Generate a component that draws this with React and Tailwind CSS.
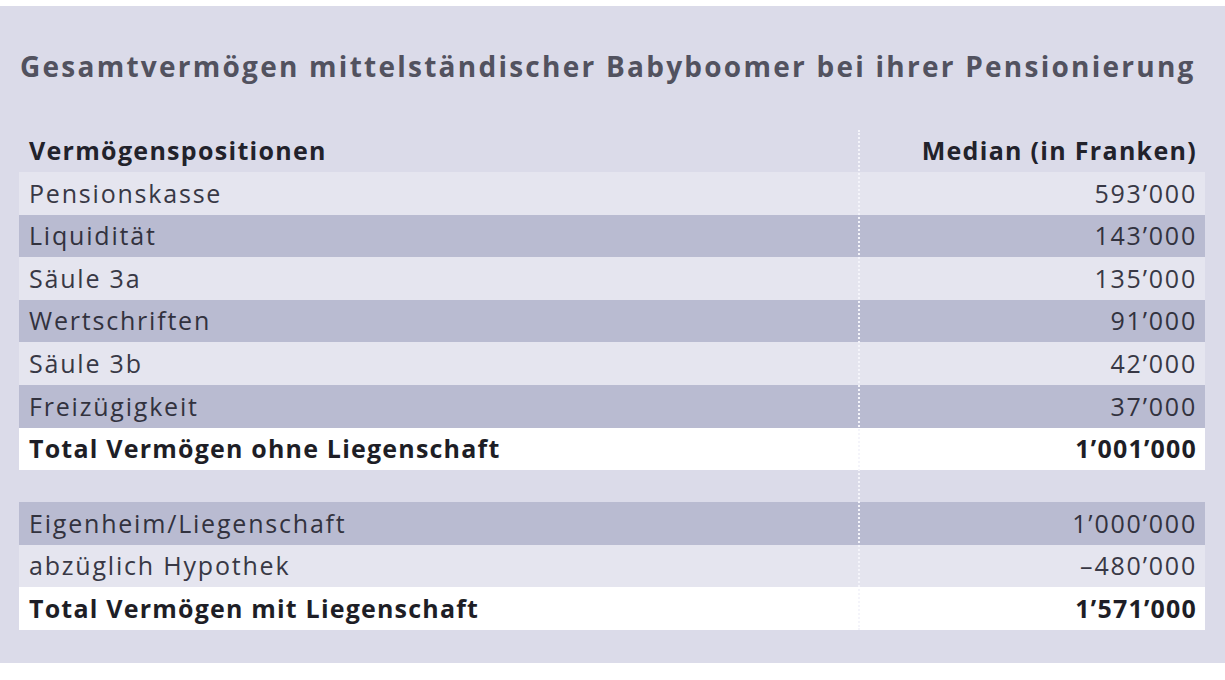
import React from 'react';

const rows = [
  { label: 'Pensionskasse', value: '593’000', tone: 'light' },
  { label: 'Liquidität', value: '143’000', tone: 'dark' },
  { label: 'Säule 3a', value: '135’000', tone: 'light' },
  { label: 'Wertschriften', value: '91’000', tone: 'dark' },
  { label: 'Säule 3b', value: '42’000', tone: 'light' },
  { label: 'Freizügigkeit', value: '37’000', tone: 'dark' },
  { label: 'Total Vermögen ohne Liegenschaft', value: '1’001’000', tone: 'total' },
];

const rows2 = [
  { label: 'Eigenheim/Liegenschaft', value: '1’000’000', tone: 'dark' },
  { label: 'abzüglich Hypothek', value: '–480’000', tone: 'light' },
  { label: 'Total Vermögen mit Liegenschaft', value: '1’571’000', tone: 'total' },
];

const toneClass = {
  light: 'bg-[#e5e5ef] text-[#383845] tracking-[1.8px]',
  dark: 'bg-[#b9bbd1] text-[#32323e] tracking-[1.8px]',
  total: 'bg-white text-[#1e1e26] font-bold tracking-[1.2px]',
};

const Row = ({ label, value, tone }) => (
  <div className={`flex h-[42.6px] items-center ${toneClass[tone]}`}>
    <div className="w-[840px] pl-[10px] whitespace-nowrap">{label}</div>
    <div className="flex-1 pr-[8px] text-right whitespace-nowrap">{value}</div>
  </div>
);

const App = () => {
  return (
    <div className="w-[1225px] h-[680px] bg-white pt-[6px]" style={{ fontFamily: '"Open Sans", sans-serif' }}>
      <div className="h-[657px] bg-[#dbdbe9] px-[19px] pt-[40px]">
        <h1 className="text-[28px] leading-[40px] font-bold text-[#52525f] pl-[1px] tracking-[2.25px] whitespace-nowrap">
          Gesamtvermögen mittelständischer Babyboomer bei ihrer Pensionierung
        </h1>

        <div className="relative mt-[44px] w-[1186px] text-[25px]">
          <div className="absolute left-[839px] top-0 bottom-0 w-0 border-l-2 border-dotted border-[#f4f4fa]" />
          <div className="flex h-[42px] items-center font-bold text-[#22222b] tracking-[1.3px]">
            <div className="w-[840px] pl-[10px]">Vermögenspositionen</div>
            <div className="flex-1 pr-[8px] text-right">Median (in Franken)</div>
          </div>
          {rows.map((r) => (
            <Row key={r.label} {...r} />
          ))}
          <div className="h-[32px]" />
          {rows2.map((r) => (
            <Row key={r.label} {...r} />
          ))}
        </div>
      </div>
    </div>
  );
};

export default App;
